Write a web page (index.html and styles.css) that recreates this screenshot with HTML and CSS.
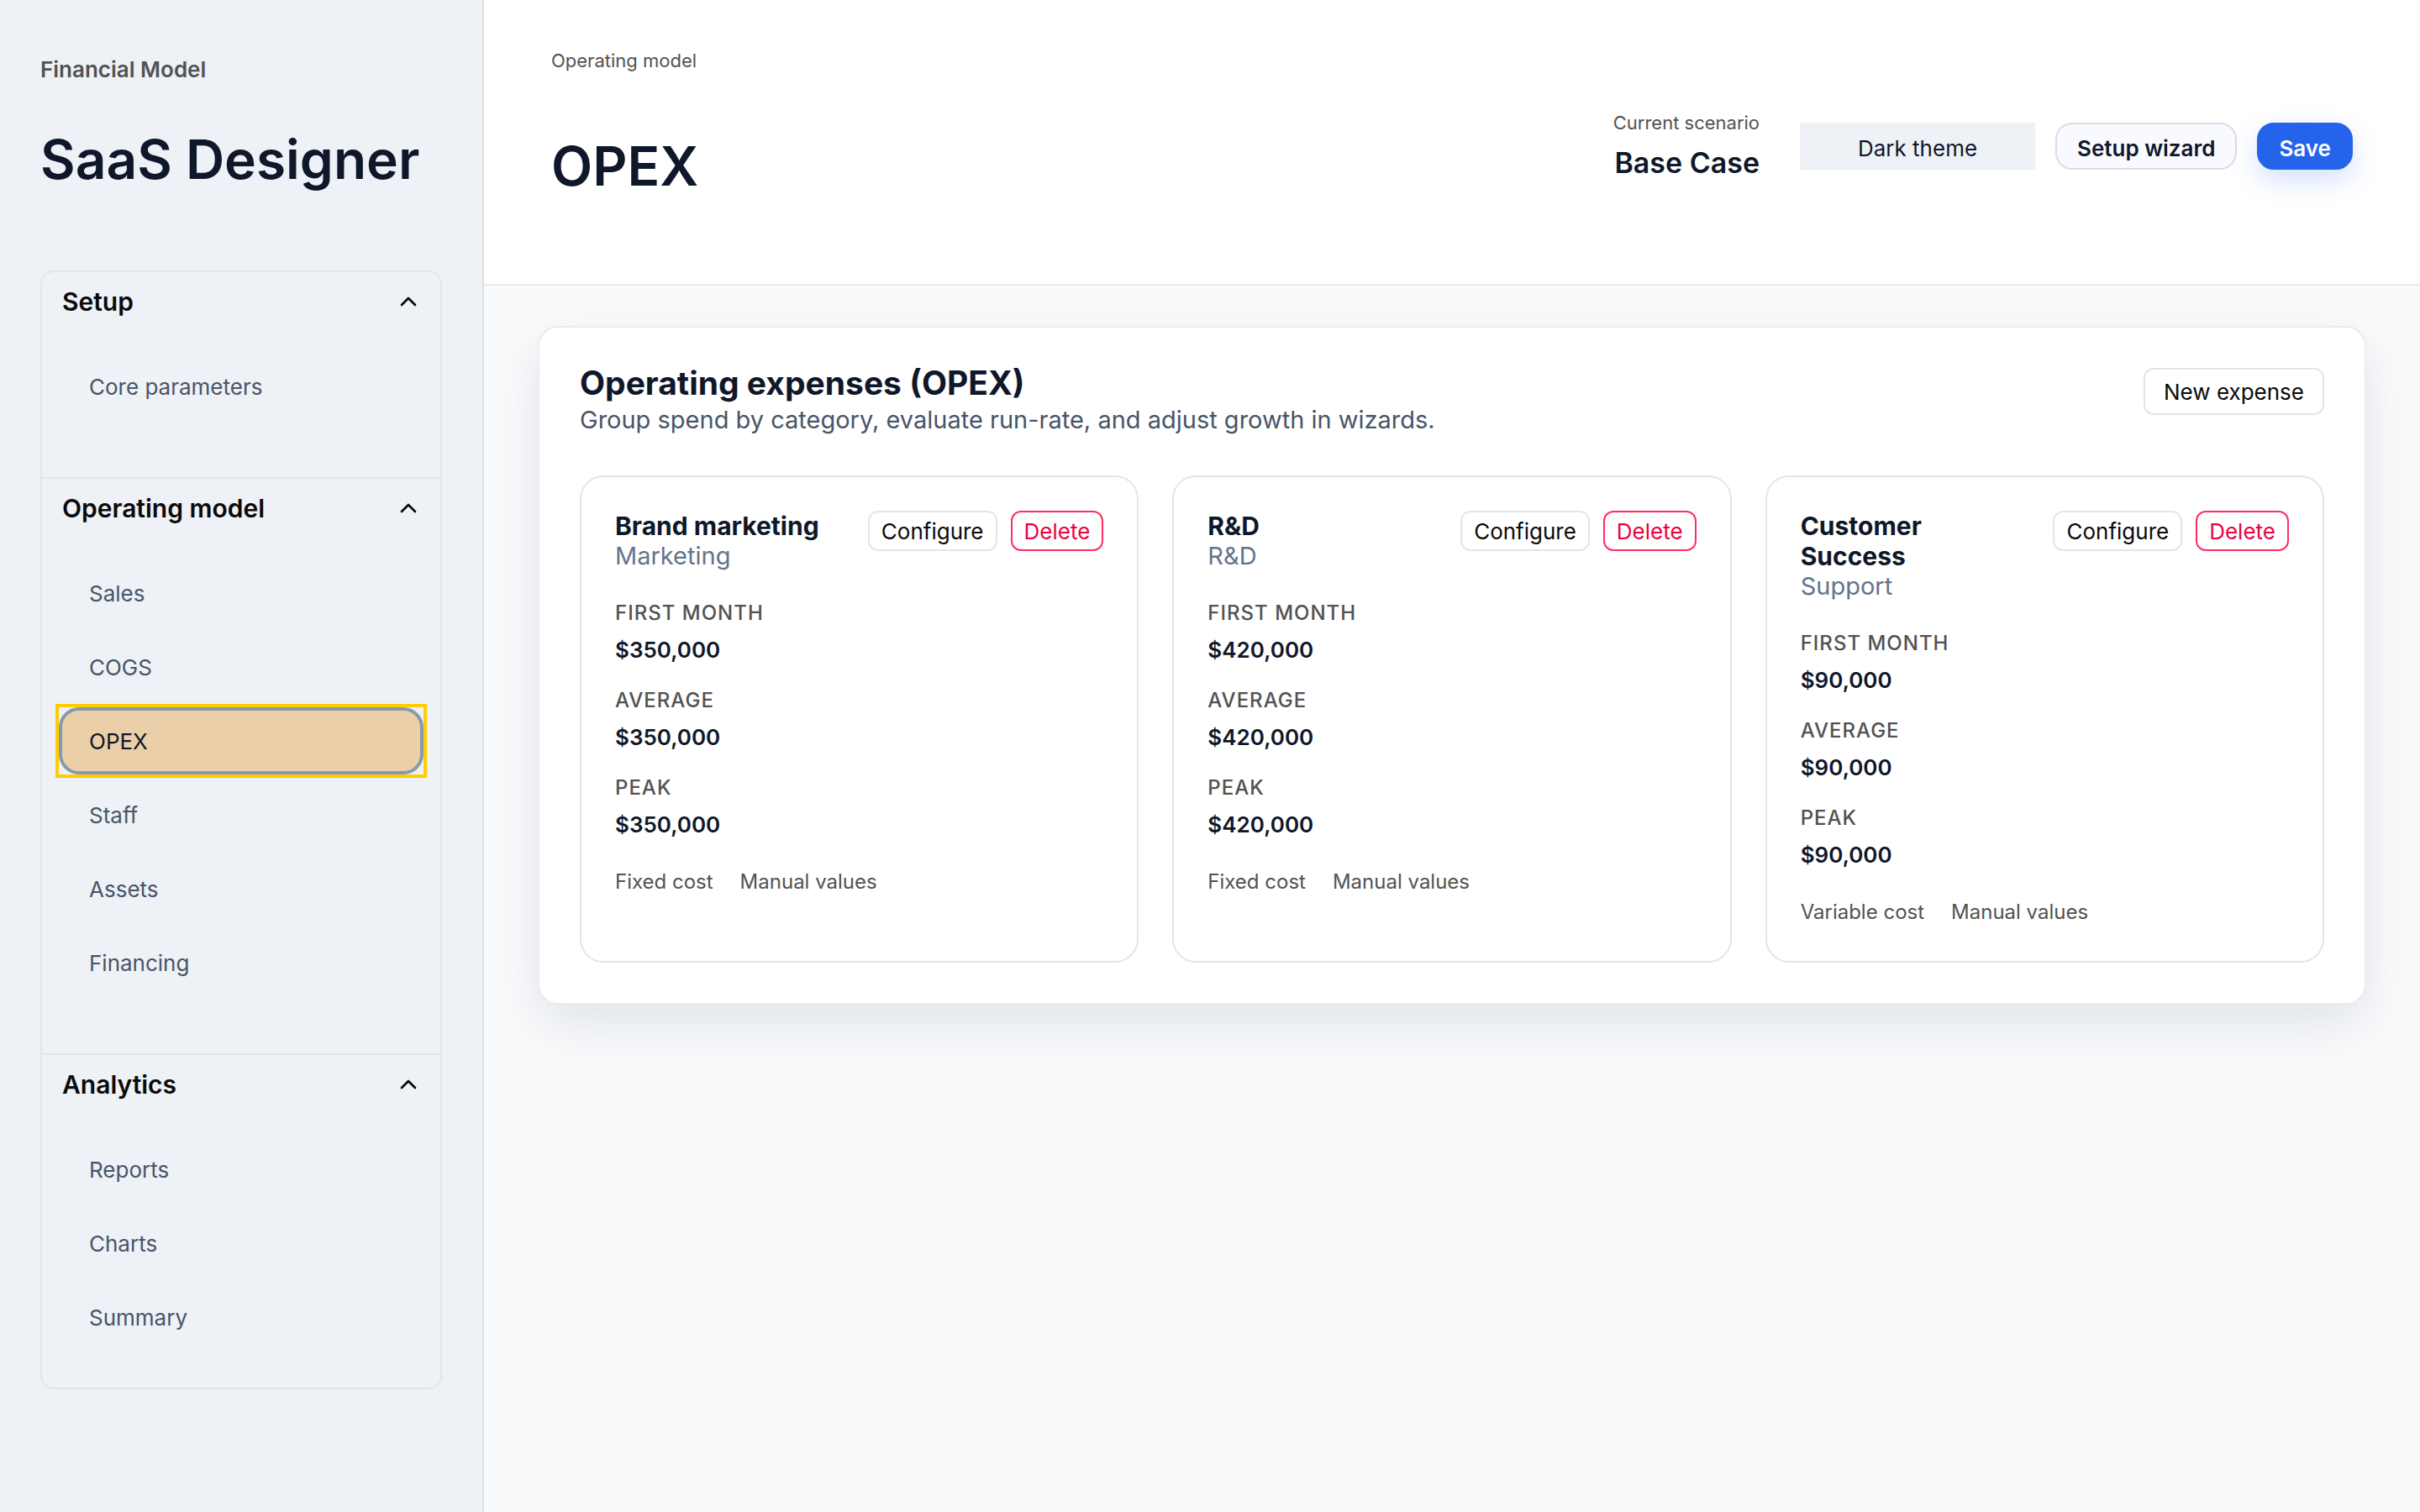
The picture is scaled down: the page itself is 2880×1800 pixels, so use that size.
FILE: index.html
```html
<!DOCTYPE html>
<html lang="en">
<head>
  <meta charset="UTF-8">
  <meta name="viewport" content="width=device-width, initial-scale=1.0">
  <title>SaaS Designer - OPEX</title>
  <link rel="stylesheet" href="styles.css">
</head>
<body>
  <div class="app">
    <aside class="sidebar">
      <p class="brand-kicker">Financial Model</p>
      <h1 class="brand-title">SaaS Designer</h1>

      <nav class="nav">
        <section class="nav-section">
          <button class="nav-toggle" type="button" aria-expanded="true">
            Setup
            <svg class="chevron" viewBox="0 0 24 24" aria-hidden="true"><path d="m18 15-6-6-6 6"/></svg>
          </button>
          <ul class="nav-list">
            <li><a href="#core">Core parameters</a></li>
          </ul>
        </section>
        <section class="nav-section">
          <button class="nav-toggle" type="button" aria-expanded="true">
            Operating model
            <svg class="chevron" viewBox="0 0 24 24" aria-hidden="true"><path d="m18 15-6-6-6 6"/></svg>
          </button>
          <ul class="nav-list">
            <li><a href="#sales">Sales</a></li>
            <li><a href="#cogs">COGS</a></li>
            <li class="active"><a href="#opex" aria-current="page">OPEX</a></li>
            <li><a href="#staff">Staff</a></li>
            <li><a href="#assets">Assets</a></li>
            <li><a href="#financing">Financing</a></li>
          </ul>
        </section>
        <section class="nav-section">
          <button class="nav-toggle" type="button" aria-expanded="true">
            Analytics
            <svg class="chevron" viewBox="0 0 24 24" aria-hidden="true"><path d="m18 15-6-6-6 6"/></svg>
          </button>
          <ul class="nav-list">
            <li><a href="#reports">Reports</a></li>
            <li><a href="#charts">Charts</a></li>
            <li><a href="#summary">Summary</a></li>
          </ul>
        </section>
      </nav>
    </aside>

    <div class="page">
      <header class="topbar">
        <div class="page-heading">
          <p class="kicker">Operating model</p>
          <h2 class="page-title">OPEX</h2>
        </div>
        <div class="actions">
          <div class="scenario">
            <span class="kicker">Current scenario</span>
            <strong>Base Case</strong>
          </div>
          <button class="btn btn-theme" type="button">Dark theme</button>
          <button class="btn btn-wizard" type="button">Setup wizard</button>
          <button class="btn btn-save" type="button">Save</button>
        </div>
      </header>

      <main class="content">
        <section class="panel">
          <div class="panel-head">
            <div>
              <h3 class="panel-title">Operating expenses (OPEX)</h3>
              <p class="panel-text">Group spend by category, evaluate run-rate, and adjust growth in wizards.</p>
            </div>
            <button class="btn btn-outline" type="button">New expense</button>
          </div>

          <div class="cards">
            <article class="card">
              <div class="card-head">
                <div>
                  <h4>Brand marketing</h4>
                  <p>Marketing</p>
                </div>
                <div class="card-actions">
                  <button class="btn btn-small" type="button">Configure</button>
                  <button class="btn btn-small btn-danger" type="button">Delete</button>
                </div>
              </div>
              <dl class="stats">
                <div><dt>First month</dt><dd>$350,000</dd></div>
                <div><dt>Average</dt><dd>$350,000</dd></div>
                <div><dt>Peak</dt><dd>$350,000</dd></div>
              </dl>
              <div class="card-foot"><span>Fixed cost</span><span>Manual values</span></div>
            </article>

            <article class="card">
              <div class="card-head">
                <div>
                  <h4>R&amp;D</h4>
                  <p>R&amp;D</p>
                </div>
                <div class="card-actions">
                  <button class="btn btn-small" type="button">Configure</button>
                  <button class="btn btn-small btn-danger" type="button">Delete</button>
                </div>
              </div>
              <dl class="stats">
                <div><dt>First month</dt><dd>$420,000</dd></div>
                <div><dt>Average</dt><dd>$420,000</dd></div>
                <div><dt>Peak</dt><dd>$420,000</dd></div>
              </dl>
              <div class="card-foot"><span>Fixed cost</span><span>Manual values</span></div>
            </article>

            <article class="card">
              <div class="card-head">
                <div>
                  <h4>Customer Success</h4>
                  <p>Support</p>
                </div>
                <div class="card-actions">
                  <button class="btn btn-small" type="button">Configure</button>
                  <button class="btn btn-small btn-danger" type="button">Delete</button>
                </div>
              </div>
              <dl class="stats">
                <div><dt>First month</dt><dd>$90,000</dd></div>
                <div><dt>Average</dt><dd>$90,000</dd></div>
                <div><dt>Peak</dt><dd>$90,000</dd></div>
              </dl>
              <div class="card-foot"><span>Variable cost</span><span>Manual values</span></div>
            </article>
          </div>
        </section>
      </main>
    </div>
  </div>
</body>
</html>
```
FILE: styles.css
```css
* {
  box-sizing: border-box;
}
body {
  margin: 0;
  font-family: Inter, "Liberation Sans", sans-serif;
  font-size: 26px;
  color: #0f172a;
  background: #f8fafc;
}
h1, h2, h3, h4, p, ul, dl, dd {
  margin: 0;
  padding: 0;
}
.app {
  display: flex;
  min-height: 100vh;
}

/* sidebar */
.sidebar {
  flex: none;
  width: 576px;
  padding: 64px 48px;
  background: #eef1f6;
  border-right: 2px solid #dcdfe4;
}
.brand-kicker {
  line-height: 38px;
  font-weight: 600;
  color: #525252;
}
.brand-title {
  margin: 52px 0 96px;
  font-size: 64px;
  line-height: 72px;
  font-weight: 600;
  white-space: nowrap;
}
.nav {
  border: 2px solid #e5e5e5;
  border-radius: 16px;
}
.nav-section {
  padding-bottom: 68px;
  border-bottom: 2px solid #e5e5e5;
}
.nav-section:last-child {
  padding-bottom: 44px;
  border-bottom: none;
}
.nav-toggle {
  display: flex;
  align-items: center;
  justify-content: space-between;
  width: 100%;
  height: 70px;
  padding: 0 22px 0 24px;
  border: none;
  background: none;
  font: inherit;
  font-size: 30px;
  font-weight: 600;
  color: #0a0a0a;
  cursor: pointer;
}
.chevron {
  width: 32px;
  height: 32px;
  fill: none;
  stroke: currentColor;
  stroke-width: 2;
  stroke-linecap: round;
  stroke-linejoin: round;
}
.nav-list {
  display: grid;
  gap: 8px;
  margin-top: 26px;
  padding: 0 20px;
  list-style: none;
}
.nav-list a {
  display: block;
  padding: 2px 32px 0;
  border: 4px solid transparent;
  border-radius: 24px;
  line-height: 70px;
  color: #475569;
  text-decoration: none;
}
.nav-list .active {
  outline: 4px solid #ffcc00;
}
.nav-list .active a {
  color: #0f172a;
  background: #ebcfa9;
  border-color: #859bad;
}

/* top bar */
.page {
  flex: 1;
  min-width: 0;
}
.topbar {
  display: flex;
  align-items: center;
  justify-content: space-between;
  padding: 58px 80px 48px;
  background: #fff;
  border-bottom: 2px solid #ebecee;
}
.kicker {
  font-size: 22px;
  line-height: 28px;
  color: #525252;
}
.page-title {
  margin: 76px 0 56px;
  font-size: 64px;
  line-height: 72px;
  font-weight: 600;
}
.actions {
  display: flex;
  align-items: center;
  gap: 24px;
}
.scenario {
  display: grid;
  gap: 12px;
  justify-items: end;
  margin-right: 24px;
}
.scenario strong {
  font-size: 34px;
  line-height: 44px;
  font-weight: 600;
}

/* buttons */
.btn {
  height: 56px;
  padding: 0 22px;
  border: 2px solid #e5e5e5;
  border-radius: 12px;
  background: #fff;
  font: inherit;
  color: #0a0a0a;
  white-space: nowrap;
  cursor: pointer;
}
.btn-theme {
  width: 280px;
  padding-top: 4px;
  border: none;
  border-radius: 0;
  background: #eef1f6;
  color: #0f172a;
}
.btn-wizard {
  padding: 4px 24px 0;
  border-color: #dadde4;
  border-radius: 20px;
  background: #f8faff;
  color: #0f172a;
  font-weight: 600;
}
.btn-save {
  padding: 4px 24px 0;
  border-color: #2563eb;
  border-radius: 20px;
  background: #2563eb;
  color: #fff;
  font-weight: 600;
  box-shadow: 0 12px 32px rgba(37, 99, 235, 0.2);
}
.btn-small {
  height: 48px;
  padding: 0 14px;
}
.btn-danger {
  border-color: #ff2e62;
  color: #ec003f;
}

/* expenses panel */
.content {
  padding: 48px 64px;
}
.panel {
  padding: 48px;
  border: 2px solid #ebecee;
  border-radius: 24px;
  background: #fff;
  box-shadow: 0 24px 60px rgba(15, 23, 42, 0.09);
}
.panel-head {
  display: flex;
  align-items: flex-start;
  justify-content: space-between;
  margin-bottom: 48px;
}
.panel-title {
  font-size: 39px;
  line-height: 36px;
  font-weight: 700;
}
.panel-text {
  margin-top: 8px;
  font-size: 29px;
  line-height: 36px;
  color: #475569;
}
.cards {
  display: grid;
  grid-template-columns: repeat(3, 1fr);
  gap: 40px;
}
.card {
  display: flex;
  flex-direction: column;
  gap: 32px;
  padding: 40px;
  border: 2px solid #e5e5e5;
  border-radius: 28px;
}
.card-head {
  display: flex;
  align-items: flex-start;
  justify-content: space-between;
  gap: 48px;
}
.card-head h4 {
  font-size: 30px;
  line-height: 36px;
  font-weight: 700;
}
.card-head p {
  font-size: 29px;
  line-height: 36px;
  color: #64748b;
}
.card-actions {
  display: flex;
  gap: 16px;
}
.stats {
  display: grid;
  gap: 24px;
}
.stats dt {
  margin-bottom: 8px;
  font-size: 24px;
  line-height: 36px;
  font-weight: 500;
  letter-spacing: 1px;
  text-transform: uppercase;
  color: #525252;
}
.stats dd {
  line-height: 36px;
  font-weight: 600;
}
.card-foot {
  display: flex;
  gap: 32px;
  font-size: 24px;
  line-height: 36px;
  color: #525252;
}
```
